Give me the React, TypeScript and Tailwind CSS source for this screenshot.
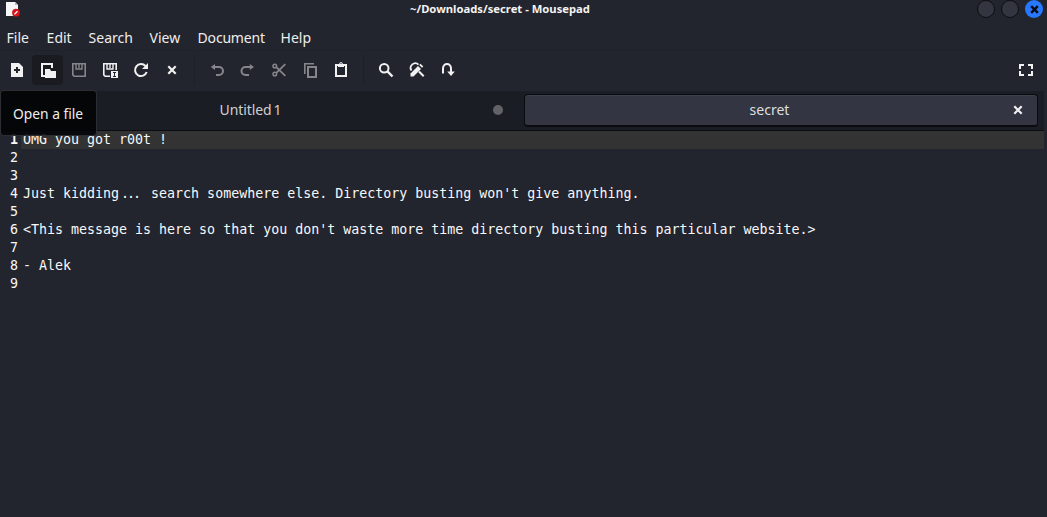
import type { ReactNode } from "react";

function Icon({ children, dim = false }: { children: ReactNode; dim?: boolean }) {
  return (
    <svg
      width="16"
      height="16"
      viewBox="0 0 16 16"
      fill="none"
      stroke="currentColor"
      strokeWidth="2"
      className={dim ? "block text-[#85868a]" : "block text-[#f1f1f1]"}
    >
      {children}
    </svg>
  );
}

function Tool({ children, active = false }: { children: ReactNode; active?: boolean }) {
  return (
    <button
      className={
        active
          ? "-ml-px flex h-[30px] w-[31px] items-center rounded-[4px] bg-[#191b21] pl-2 mr-px"
          : "flex h-[30px] w-[31px] items-center pl-[7px]"
      }
    >
      {children}
    </button>
  );
}

function Divider() {
  return (
    <div className="flex h-[30px] w-[14px] pl-[6px]">
      <div className="w-px bg-[#1e2027]" />
    </div>
  );
}

function Cross({ size = 10, color = "#f1f1f1", width = 2.2 }: { size?: number; color?: string; width?: number }) {
  return (
    <svg width={size} height={size} viewBox="0 0 10 10" stroke={color} strokeWidth={width} className="block">
      <path d="M1.3 1.3 8.7 8.7M8.7 1.3 1.3 8.7" />
    </svg>
  );
}

const menus = [
  { label: "File", box: "w-10" },
  { label: "Edit", box: "w-[42px]" },
  { label: "Search", box: "w-[61px]" },
  { label: "View", box: "w-12" },
  { label: "Document", box: "w-[83px] tracking-[-0.2px]" },
  { label: "Help", box: "w-10" },
];

const lines: ReactNode[] = [
  "OMG you got r00t !",
  "",
  "",
  <>
    Just kidding
    <span className="inline-block w-6 pl-[2px] tracking-[-2px]">...</span>
    {" search somewhere else. Directory busting won't give anything."}
  </>,
  "",
  "<This message is here so that you don't waste more time directory busting this particular website.>",
  "",
  "- Alek",
  "",
];

export default function App() {
  return (
    <div className="relative flex h-[517px] w-[1047px] flex-col overflow-hidden bg-[#23252e] pr-[3px] font-['Noto_Sans',sans-serif] text-[#eeeeec]">
      <header className="grid h-[19px] shrink-0 grid-cols-[1fr_auto_1fr] items-start pl-[6px]">
        <svg width="15" height="17" viewBox="0 0 15 17" className="block">
          <path d="M0 2h9l3 3v11H0z" fill="#f7f7f7" />
          <path d="M9 2v3h3z" fill="#b9b9b9" />
          <circle cx="10" cy="12.7" r="3.9" fill="#d5151b" />
          <path d="m8.5 14.2 3-3" stroke="#fff" strokeWidth="1.3" />
        </svg>
        <h1 className="relative left-[-25px] whitespace-nowrap text-[11.25px] leading-[17px] font-bold text-[#f3f3f3]">
          ~/Downloads/secret - Mousepad
        </h1>
        <div className="flex justify-end gap-[6px] pr-px">
          <span className="h-[18px] w-[18px] rounded-full border border-[#0d0e11] bg-[#333640]" />
          <span className="h-[18px] w-[18px] rounded-full border border-[#0d0e11] bg-[#333640]" />
          <span className="flex h-[18px] w-[18px] items-center justify-center rounded-full bg-[#2777ff]">
            <Cross size={9} color="#090b12" width={2.7} />
          </span>
        </div>
      </header>

      <nav className="flex h-8 shrink-0 items-center border-b border-[#20222a] pl-[6.6px] text-[14px]">
        {menus.map((m) => (
          <span key={m.label} className={m.box + " pt-[6px] leading-5"}>
            {m.label}
          </span>
        ))}
      </nav>

      <div className="flex h-10 shrink-0 items-start pt-1 pl-[2px]">
        <Tool>
          <Icon>
            <path d="M2 1h8l4 4v10H2z" fill="currentColor" stroke="none" />
            <path d="M8 5v6M5 8h6" stroke="#23252e" />
          </Icon>
        </Tool>
        <Tool active>
          <Icon>
            <path d="M6 14H2V2h10v4" />
            <path d="M5 7h5l1 2h5v7H5z" fill="currentColor" stroke="none" />
          </Icon>
        </Tool>
        <Tool>
          <Icon dim>
            <path d="M1.8 1.8h12.4v12.4H3.2l-1.4-1.4z" strokeWidth="1.6" />
            <path d="M5 1v6h6V1M8 1v5" strokeWidth="1.4" />
          </Icon>
        </Tool>
        <Tool>
          <Icon>
            <path d="M8 14.2H3.2l-1.4-1.4v-11h12.4V8" strokeWidth="1.6" />
            <path d="M5 1v6h6V1M8 1v5" strokeWidth="1.4" />
            <path d="M9 9h7v7H9z" fill="currentColor" stroke="none" />
            <path d="M11 10.5h3M12.5 10.5v4M11 14.5h3" stroke="#23252e" strokeWidth="1" />
          </Icon>
        </Tool>
        <Tool>
          <Icon>
            <path d="M12.5 4A6 6 0 1 0 13.7 10" />
            <path d="M9 7h6V1z" fill="currentColor" stroke="none" />
          </Icon>
        </Tool>
        <Tool>
          <Icon>
            <path d="m4.3 4.3 7.4 7.4M11.7 4.3l-7.4 7.4" strokeWidth="2.2" />
          </Icon>
        </Tool>
        <Divider />
        <Tool>
          <Icon dim>
            <path d="M4 5h6a4 4 0 0 1 0 8H7" />
            <path d="M1.8 5 6 2v6z" fill="currentColor" stroke="none" />
          </Icon>
        </Tool>
        <Tool>
          <Icon dim>
            <path d="M11 5H5.5a4 4 0 0 0 0 8H9" />
            <path d="M14 5 9.8 2v6z" fill="currentColor" stroke="none" />
          </Icon>
        </Tool>
        <Tool>
          <Icon dim>
            <circle cx="3.8" cy="4" r="1.8" strokeWidth="1.5" />
            <circle cx="3.8" cy="12" r="1.8" strokeWidth="1.5" />
            <path d="m5.3 5.2 9 8.6M5.3 10.8l9-8.6" strokeWidth="1.8" />
          </Icon>
        </Tool>
        <Tool>
          <Icon dim>
            <path d="M2.8 12V1.8H12" strokeWidth="1.6" />
            <path d="M6 5h8v10H6z" />
          </Icon>
        </Tool>
        <Tool>
          <Icon>
            <path d="M3 3h10v11H3z" />
            <path d="M5 2h6v3H5z" fill="currentColor" stroke="none" />
            <circle cx="8" cy="2" r="1.4" strokeWidth="1" />
          </Icon>
        </Tool>
        <Divider />
        <Tool>
          <Icon>
            <circle cx="6.2" cy="6.2" r="4.3" />
            <path d="m9.2 9.2 5.3 5.3" strokeWidth="2.4" />
          </Icon>
        </Tool>
        <Tool>
          <Icon>
            <path d="M2.5 8.5A4.6 4.6 0 0 1 9.5 2.6" strokeWidth="1.8" />
            <path d="M1.5 14.5v-3L9 4l3 3-7.500 7.500z" fill="currentColor" stroke="none" />
            <path d="m10.200 3 1.300-1.300 2.800 2.800L13 5.800z" fill="currentColor" stroke="none" />
            <path d="m10 9.500 4.700 4.700" strokeWidth="2" />
          </Icon>
        </Tool>
        <Tool>
          <Icon>
            <path d="M3 11.5V6.6C3 .6 11 .6 11 6.6V10" />
            <path d="M7.200 9.500h7.600L11 14z" fill="currentColor" stroke="none" />
          </Icon>
        </Tool>
        <div className="ml-auto flex h-[30px] items-center pr-[10px]">
          <Icon>
            <path d="M2 7V3h4M10 3h4v4M14 9v4h-4M6 13H2V9" />
          </Icon>
        </div>
      </div>

      <div className="flex h-10 shrink-0 border-b border-[#0c0d10] bg-[#1b1d24] pt-[3px] text-[14px] text-[#dededf]">
        <div className="grid h-8 w-[524px] grid-cols-[1fr_22px] items-center pr-[10px]">
          <span className="pb-[2px] pl-[9px] text-center tracking-[-0.1px] text-[#cfcfd1]">
            Untitled<span className="pl-[2px]">1</span>
          </span>
          <span className="ml-[1px] h-[10px] w-[10px] rounded-full bg-[#626367]" />
        </div>
        <div className="grid h-[33px] w-[514px] grid-cols-[1fr_24px] items-center rounded-[4px] border border-b-2 border-[#0a0b0e] bg-[#333642] shadow-[inset_0_1px_0_#3d404b]">
          <span className="pb-[2px] pl-[1px] text-center">secret</span>
          <Cross size={10} />
        </div>
      </div>

      <main className="flex-1 font-['DejaVu_Sans_Mono',monospace] text-[13.305px] leading-[18px] text-[#f8f8f8]">
        {lines.map((line, i) => (
          <div key={i} className="flex h-[18px]">
            <span className={i === 0 ? "w-[21px] pr-[3px] text-right font-bold" : "w-[21px] pr-[3px] text-right"}>
              {i + 1}
            </span>
            <span className={i === 0 ? "flex-1 bg-[#333333] pl-[2px] whitespace-pre" : "flex-1 pl-[2px] whitespace-pre"}>
              {line}
            </span>
          </div>
        ))}
      </main>

      <div className="absolute top-[90px] left-0 flex h-[46px] w-[97px] items-center rounded-[4px] border border-[#303238]/90 bg-[#030405]/90 pt-[2px] pl-3 text-[13.8px] whitespace-nowrap text-[#eeeeec]">
        Open a file
      </div>
    </div>
  );
}
